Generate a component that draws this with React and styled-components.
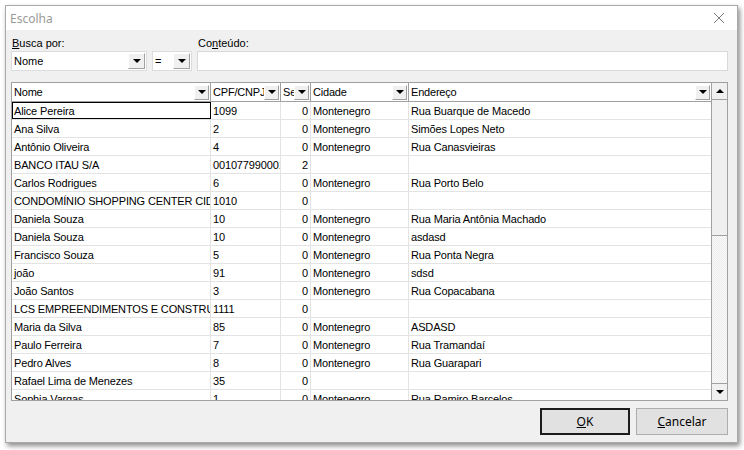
import React from "react";
import styled, { createGlobalStyle } from "styled-components";

const Global = createGlobalStyle`
  html, body { margin: 0; padding: 0; background: #ffffff; }
  body { font-family: "Liberation Sans", Arial, sans-serif; font-size: 11px; color: #000; }
  * { box-sizing: border-box; }
`;

const Page = styled.div`
  width: 744px;
  height: 450px;
  padding: 5px 0 0 5px;
`;

const Window = styled.div`
  width: 733px;
  height: 438px;
  border: 1px solid #a9a9a9;
  background: #f0f0f0;
  box-shadow: 2px 3px 5px rgba(0, 0, 0, 0.45);
  display: flex;
  flex-direction: column;
`;

const TitleBar = styled.div`
  height: 24px;
  background: #ffffff;
  display: flex;
  align-items: center;
  justify-content: space-between;
  padding: 0 12px 0 4px;
`;

const Title = styled.span`
  font-family: "Noto Sans", "Open Sans", sans-serif;
  font-size: 12px;
  color: #9a9a9a;
`;

const Body = styled.div`
  flex: 1;
  padding: 7px 9px 0 5px;
  display: flex;
  flex-direction: column;
`;

const SearchRow = styled.div`
  display: flex;
  gap: 5px;
  align-items: flex-end;
`;

const Field = styled.div`
  display: flex;
  flex-direction: column;
  gap: 1px;
  flex: ${(p) => (p.$grow ? 1 : "none")};
`;

const Label = styled.span`
  height: 13px;
  line-height: 13px;
  padding-left: 1px;
  u { text-decoration: underline; }
`;

const Combo = styled.div`
  width: ${(p) => p.$w}px;
  height: 20px;
  background: #fff;
  border: 1px solid #dcdcdc;
  display: flex;
  align-items: center;
  padding: 1px;
`;

const ComboText = styled.span`
  flex: 1;
  padding-left: 1px;
`;

const Input = styled.div`
  height: 20px;
  background: #fff;
  border: 1px solid #d9d9d9;
`;

const DropBtn = styled.span`
  width: ${(p) => p.$w || 17}px;
  height: ${(p) => p.$h || 16}px;
  background: #f0f0f0;
  border-top: 1px solid #fff;
  border-left: 1px solid #fff;
  border-right: 1px solid #a0a0a0;
  border-bottom: 1px solid #a0a0a0;
  display: flex;
  align-items: center;
  justify-content: center;
  flex: none;
  &::after {
    content: "";
    border-left: 4px solid transparent;
    border-right: 4px solid transparent;
    border-top: 4px solid #000;
  }
`;

const GridFrame = styled.div`
  margin-top: 11px;
  height: 319px;
  border: 1px solid #a0a0a0;
  background: #fff;
  display: flex;
  overflow: hidden;
`;

const GridMain = styled.div`
  flex: 1;
  display: flex;
  flex-direction: column;
  overflow: hidden;
`;

const cols = "199px 70px 30px 98px 302px";

const HeaderRow = styled.div`
  display: grid;
  grid-template-columns: ${cols};
  height: 19px;
  border-bottom: 1px solid #a0a0a0;
  flex: none;
`;

const HeaderCell = styled.div`
  display: flex;
  align-items: center;
  border-right: 1px solid #a0a0a0;
  padding: 0 1px 0 2px;
  overflow: hidden;
  white-space: nowrap;
  &:last-child { border-right: none; }
`;

const HeaderText = styled.span`
  flex: 1;
  overflow: hidden;
  letter-spacing: -0.2px;
`;

const Row = styled.div`
  display: grid;
  grid-template-columns: ${cols};
  height: 18px;
  border-bottom: 1px solid #e3e3e3;
  flex: none;
`;

const Cell = styled.div`
  line-height: 16px;
  padding: 1px 2px 0;
  overflow: hidden;
  white-space: nowrap;
  letter-spacing: -0.15px;
  text-align: ${(p) => (p.$right ? "right" : "left")};
  border-right: 1px solid #e3e3e3;
  ${(p) => (p.$focus ? "outline: 1px solid #000; outline-offset: -1px;" : "")}
  &:last-child { border-right: none; }
`;

const ScrollBar = styled.div`
  width: 16px;
  flex: none;
  border-left: 1px solid #a0a0a0;
  display: flex;
  flex-direction: column;
  background-color: #f4f4f4;
  background-image: repeating-conic-gradient(#ececec 0% 25%, #fafafa 0% 50%);
  background-size: 2px 2px;
`;

const ScrollBtn = styled.div`
  height: 17px;
  background: #f0f0f0;
  border-bottom: ${(p) => (p.$down ? "none" : "1px solid #a0a0a0")};
  border-top: ${(p) => (p.$down ? "1px solid #a0a0a0" : "none")};
  display: flex;
  align-items: center;
  justify-content: center;
  &::after {
    content: "";
    border-left: 4px solid transparent;
    border-right: 4px solid transparent;
    ${(p) => (p.$down ? "border-top: 4px solid #000;" : "border-bottom: 4px solid #000;")}
  }
`;

const Thumb = styled.div`
  height: 136px;
  background: #efefef;
  border-bottom: 1px solid #a0a0a0;
`;

const Track = styled.div`
  flex: 1;
`;

const Footer = styled.div`
  display: flex;
  justify-content: flex-end;
  gap: 6px;
  padding-top: 7px;
`;

const Button = styled.div`
  width: ${(p) => (p.$default ? 90 : 92)}px;
  height: 27px;
  border: ${(p) => (p.$default ? "2px solid #1c1c1c" : "1px solid #adadad")};
  background: #e1e1e1;
  display: flex;
  align-items: center;
  justify-content: center;
  font-family: "Noto Sans", "Open Sans", sans-serif;
  font-size: 12px;
  u { text-decoration: underline; }
`;

const CloseIcon = () => (
  <svg width="12" height="12" viewBox="0 0 12 12">
    <path d="M1 1 L11 11 M11 1 L1 11" stroke="#7a7a7a" strokeWidth="1" fill="none" />
  </svg>
);

const headers = ["Nome", "CPF/CNPJ", "Sexo", "Cidade", "Endereço"];

const rows = [
  ["Alice Pereira", "1099", "0", "Montenegro", "Rua Buarque de Macedo"],
  ["Ana Silva", "2", "0", "Montenegro", "Simões Lopes Neto"],
  ["Antônio Oliveira", "4", "0", "Montenegro", "Rua Canasvieiras"],
  ["BANCO ITAU S/A", "00107799000191", "2", "", ""],
  ["Carlos Rodrigues", "6", "0", "Montenegro", "Rua Porto Belo"],
  ["CONDOMÍNIO SHOPPING CENTER CIDADE", "1010", "0", "", ""],
  ["Daniela Souza", "10", "0", "Montenegro", "Rua Maria Antônia Machado"],
  ["Daniela Souza", "10", "0", "Montenegro", "asdasd"],
  ["Francisco Souza", "5", "0", "Montenegro", "Rua Ponta Negra"],
  ["joão", "91", "0", "Montenegro", "sdsd"],
  ["João Santos", "3", "0", "Montenegro", "Rua Copacabana"],
  ["LCS EMPREENDIMENTOS E CONSTRUÇÕES", "1111", "0", "", ""],
  ["Maria da Silva", "85", "0", "Montenegro", "ASDASD"],
  ["Paulo Ferreira", "7", "0", "Montenegro", "Rua Tramandaí"],
  ["Pedro Alves", "8", "0", "Montenegro", "Rua Guarapari"],
  ["Rafael Lima de Menezes", "35", "0", "", ""],
  ["Sophia Vargas", "1", "0", "Montenegro", "Rua Ramiro Barcelos"],
];

export default function App() {
  return (
    <Page>
      <Global />
      <Window>
        <TitleBar>
          <Title>Escolha</Title>
          <CloseIcon />
        </TitleBar>
        <Body>
          <SearchRow>
            <Field>
              <Label><u>B</u>usca por:</Label>
              <Combo $w={136}>
                <ComboText>Nome</ComboText>
                <DropBtn />
              </Combo>
            </Field>
            <Field>
              <Label>&nbsp;</Label>
              <Combo $w={40}>
                <ComboText>=</ComboText>
                <DropBtn />
              </Combo>
            </Field>
            <Field $grow>
              <Label>Co<u>n</u>teúdo:</Label>
              <Input />
            </Field>
          </SearchRow>
          <GridFrame>
            <GridMain>
              <HeaderRow>
                {headers.map((h) => (
                  <HeaderCell key={h}>
                    <HeaderText>{h}</HeaderText>
                    <DropBtn $w={15} $h={15} />
                  </HeaderCell>
                ))}
              </HeaderRow>
              {rows.map((r, i) => (
                <Row key={i}>
                  <Cell $focus={i === 0}>{r[0]}</Cell>
                  <Cell>{r[1]}</Cell>
                  <Cell $right>{r[2]}</Cell>
                  <Cell>{r[3]}</Cell>
                  <Cell>{r[4]}</Cell>
                </Row>
              ))}
            </GridMain>
            <ScrollBar>
              <ScrollBtn />
              <Thumb />
              <Track />
              <ScrollBtn $down />
            </ScrollBar>
          </GridFrame>
          <Footer>
            <Button $default><u>O</u>K</Button>
            <Button><u>C</u>ancelar</Button>
          </Footer>
        </Body>
      </Window>
    </Page>
  );
}
